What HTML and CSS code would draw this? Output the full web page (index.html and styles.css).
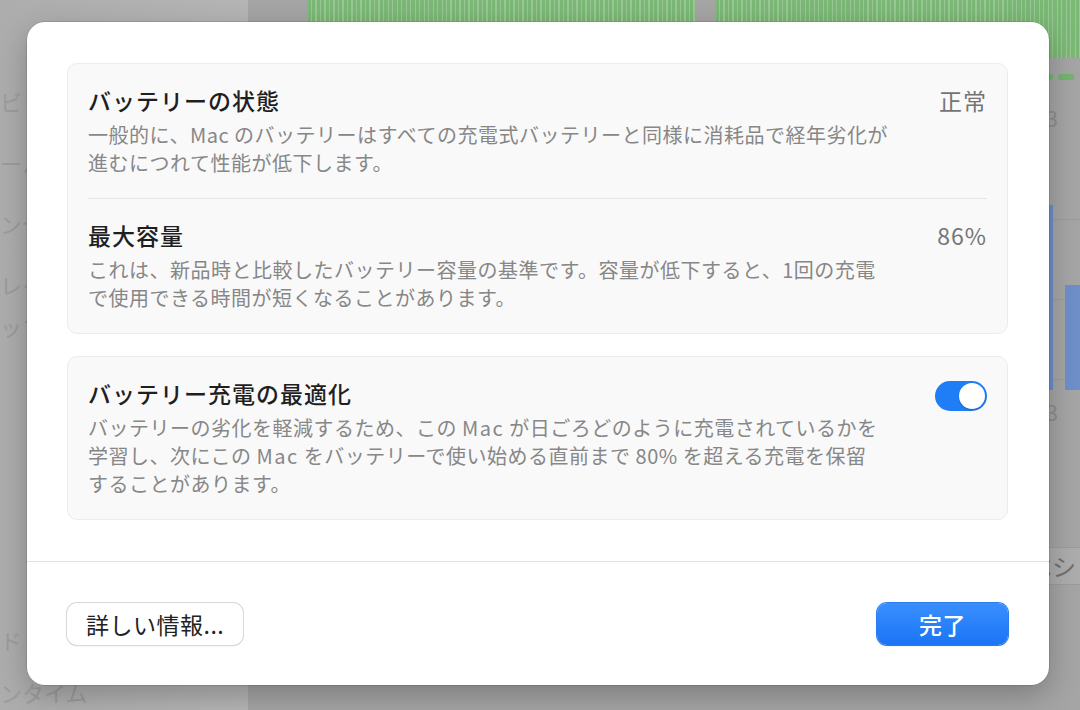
FILE: index.html
```html
<!DOCTYPE html>
<html lang="ja">
<head>
    <meta charset="UTF-8">
    <meta name="viewport" content="width=device-width, initial-scale=1.0">
    <title>バッテリーの状態</title>
    <link rel="stylesheet" href="styles.css">
</head>
<body>
    <!-- 背後の設定ウインドウ（暗く表示） -->
    <div class="window">
        <aside class="sidebar">
            <div class="side-item">ビリ</div>
            <div class="side-item">ール</div>
            <div class="side-item">ンセ</div>
            <div class="side-item side-item-tight">レイ</div>
            <div class="side-item side-item-tight">ップ</div>
            <div class="side-bottom">
                <div class="side-item">ド</div>
                <div class="side-item">ンタイム</div>
            </div>
        </aside>
        <main class="main">
            <div class="usage">
                <div class="usage-bar usage-bar-left"></div>
                <div class="usage-bar"></div>
            </div>
            <div class="usage-small">
                <span class="blip"></span>
                <span class="blip blip-long"></span>
            </div>
            <div class="axis-label">3</div>
            <div class="chart">
                <div class="chart-bar chart-bar-a"></div>
                <div class="chart-bar chart-bar-b"></div>
            </div>
            <div class="axis-label">3</div>
            <div class="list-row">ペシ</div>
        </main>
    </div>

    <!-- バッテリーの状態シート -->
    <div class="sheet">
        <div class="sheet-body">
            <section class="group">
                <div class="row">
                    <div class="row-text">
                        <h2 class="row-title">バッテリーの状態</h2>
                        <p class="row-desc">一般的に、Mac のバッテリーはすべての充電式バッテリーと同様に消耗品で経年劣化が<br>進むにつれて性能が低下します。</p>
                    </div>
                    <span class="row-value">正常</span>
                </div>
                <div class="row">
                    <div class="row-text">
                        <h2 class="row-title">最大容量</h2>
                        <p class="row-desc">これは、新品時と比較したバッテリー容量の基準です。容量が低下すると、1回の充電<br>で使用できる時間が短くなることがあります。</p>
                    </div>
                    <span class="row-value">86%</span>
                </div>
            </section>

            <section class="group">
                <div class="row">
                    <div class="row-text">
                        <h2 class="row-title">バッテリー充電の最適化</h2>
                        <p class="row-desc">バッテリーの劣化を軽減するため、この <span class="latin">Mac</span> が日ごろどのように充電されているかを<br>学習し、次にこの <span class="latin">Mac</span> をバッテリーで使い始める直前まで 80% を超える充電を保留<br>することがあります。</p>
                    </div>
                    <span class="switch is-on"><span class="knob"></span></span>
                </div>
            </section>
        </div>

        <div class="sheet-footer">
            <button class="btn">詳しい情報...</button>
            <button class="btn btn-primary">完了</button>
        </div>
    </div>
</body>
</html>
```

FILE: styles.css
```css
body {
    margin: 0;
    width: 1080px;
    height: 710px;
    overflow: hidden;
    position: relative;
    background: #a6a6a6;
    font-family: "Noto Sans CJK JP", "Noto Sans", sans-serif;
}

/* 背後のウインドウ */
.window {
    display: flex;
    height: 710px;
}
.sidebar {
    width: 248px;
    flex-shrink: 0;
    display: flex;
    flex-direction: column;
    padding-top: 85px;
    box-sizing: border-box;
    background: linear-gradient(90deg, #adadad, #b5b5b5);
    color: #9c9c9c;
    font-size: 22px;
    overflow: hidden;
}
.side-item {
    height: 61px;
    line-height: 32px;
    white-space: nowrap;
}
.side-item-tight {
    height: 42px;
}
.side-bottom {
    margin-top: auto;
    padding-bottom: 2px;
}
.side-bottom .side-item {
    height: 32px;
    margin-top: 20px;
}
.main {
    flex: 1;
    display: flex;
    flex-direction: column;
    overflow: hidden;
    background: #a5a5a5;
}
.usage {
    display: flex;
    gap: 21px;
    height: 58px;
    padding-left: 60px;
}
.usage-bar {
    flex: 1;
    background: repeating-linear-gradient(90deg, #7bb876 0 3px, #98c893 3px 4.5px);
}
.usage-bar-left {
    flex: none;
    width: 387px;
}
.usage-small {
    display: flex;
    justify-content: flex-end;
    align-items: center;
    gap: 5px;
    height: 38px;
    padding-right: 6px;
}
.blip {
    width: 8px;
    height: 6px;
    background: #74b46f;
    border-radius: 2px;
}
.blip-long {
    width: 16px;
}
.axis-label {
    height: 44px;
    line-height: 44px;
    text-align: right;
    padding-right: 22px;
    color: #8e8e8e;
    font-size: 21px;
}
.chart {
    display: flex;
    justify-content: flex-end;
    align-items: flex-end;
    gap: 12px;
    height: 250px;
    margin-right: -20px;
    background: repeating-linear-gradient(180deg, #a5a5a5 0 79px, #9c9c9c 79px 80px);
}
.chart-bar {
    background: #6f8fc9;
}
.chart-bar-a {
    width: 24px;
    height: 185px;
}
.chart-bar-b {
    width: 35px;
    height: 105px;
}
.list-row {
    margin-top: 113px;
    height: 36px;
    line-height: 36px;
    text-align: right;
    padding-right: 4px;
    color: #707070;
    font-size: 24px;
    background: #adadad;
    border-top: 1px solid #9c9c9c;
    border-bottom: 1px solid #9c9c9c;
}

/* シート */
.sheet {
    position: absolute;
    left: 27px;
    top: 22px;
    width: 1022px;
    background: #fff;
    border-radius: 18px;
    box-shadow: 0 0 0 0.5px rgba(0, 0, 0, 0.2), 0 10px 30px rgba(0, 0, 0, 0.25);
}
.sheet-body {
    display: flex;
    flex-direction: column;
    gap: 22px;
    padding: 41px 41px 41px 40px;
}
.group {
    background: #f9f9f9;
    border: 1px solid #ececec;
    border-radius: 10px;
    padding: 0 20px;
}
.row {
    display: flex;
    align-items: flex-start;
    justify-content: space-between;
    padding: 21px 0;
}
.row + .row {
    border-top: 1px solid #e6e6e6;
}
.row-title {
    margin: 0;
    font-size: 23px;
    line-height: 30px;
    font-weight: 500;
    letter-spacing: 1px;
    color: #1f1f1f;
}
.row-desc {
    margin: 6px 0 0;
    font-size: 20px;
    line-height: 28px;
    letter-spacing: 0.5px;
    color: #878787;
    white-space: nowrap;
}
.latin {
    letter-spacing: 1.5px;
}
.row-value {
    font-size: 23px;
    line-height: 30px;
    letter-spacing: 1px;
    color: #747474;
}
.switch {
    width: 52px;
    height: 30px;
    margin-top: 3px;
    border-radius: 15px;
    background: #e3e3e3;
    display: flex;
    align-items: center;
    padding: 2px;
    box-sizing: border-box;
}
.switch.is-on {
    background: #1f7df6;
    justify-content: flex-end;
}
.knob {
    width: 26px;
    height: 26px;
    border-radius: 50%;
    background: #fff;
    box-shadow: 0 1px 2px rgba(0, 0, 0, 0.2);
}
.sheet-footer {
    display: flex;
    justify-content: space-between;
    padding: 41px 41px 40px 40px;
    border-top: 1px solid #e2e2e2;
}
.btn {
    height: 42px;
    padding: 0 19px;
    border: none;
    border-radius: 10px;
    background: #fff;
    box-shadow: 0 0 0 1px #d9d9d9, 0 1px 2px rgba(0, 0, 0, 0.15);
    font-family: inherit;
    font-size: 23px;
    letter-spacing: 0.5px;
    color: #222;
}
.btn-primary {
    min-width: 131px;
    background: linear-gradient(180deg, #3a8fff, #1a74f4);
    box-shadow: 0 0 0 1px #2b7df0, 0 1px 2px rgba(0, 0, 0, 0.15);
    color: #fff;
    font-weight: 500;
}
```
